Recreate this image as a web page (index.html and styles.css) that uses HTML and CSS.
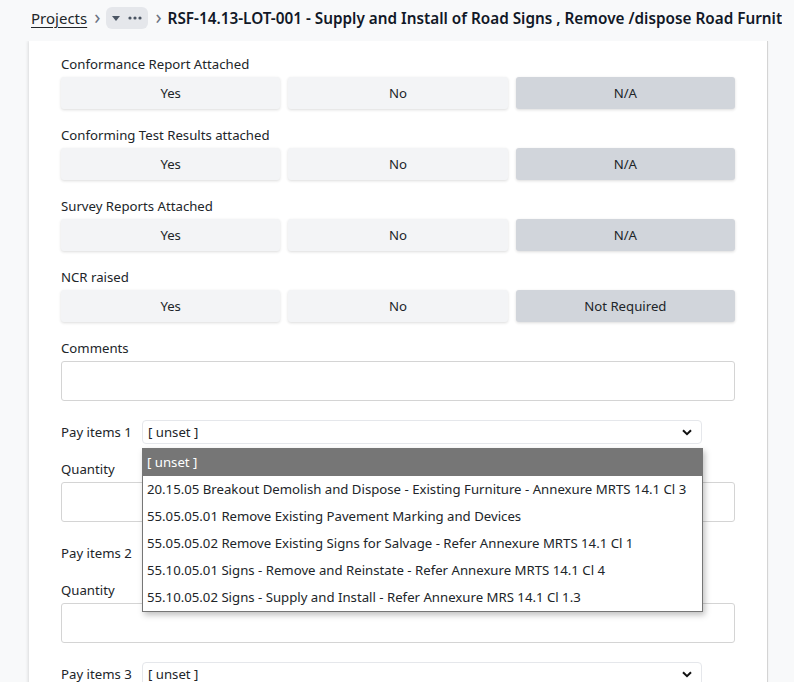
FILE: index.html
```html
<!DOCTYPE html>
<html>
<head>
<meta charset="utf-8">
<link rel="stylesheet" href="styles.css">
</head>
<body>
<header class="topbar">
  <a class="crumb-link" href="#">Projects</a>
  <span class="chev">&#x203A;</span>
  <span class="pill">
    <svg class="caret" width="8" height="5" viewBox="0 0 8 5"><path d="M0 0h8L4 5z" fill="#4b5563"/></svg>
    <svg class="dots" width="14" height="4" viewBox="0 0 14 4"><circle cx="2" cy="2" r="1.6" fill="#4b5563"/><circle cx="7" cy="2" r="1.6" fill="#4b5563"/><circle cx="12" cy="2" r="1.6" fill="#4b5563"/></svg>
  </span>
  <span class="chev">&#x203A;</span>
  <span class="title">RSF-14.13-LOT-001 - Supply and Install of Road Signs , Remove /dispose Road Furniture</span>
</header>
<main class="page">
  <section class="card">
    <div class="group">
      <div class="label">Conformance Report Attached</div>
      <div class="choices"><button class="opt">Yes</button><button class="opt">No</button><button class="opt sel">N/A</button></div>
    </div>
    <div class="group">
      <div class="label">Conforming Test Results attached</div>
      <div class="choices"><button class="opt">Yes</button><button class="opt">No</button><button class="opt sel">N/A</button></div>
    </div>
    <div class="group">
      <div class="label">Survey Reports Attached</div>
      <div class="choices"><button class="opt">Yes</button><button class="opt">No</button><button class="opt sel">N/A</button></div>
    </div>
    <div class="group">
      <div class="label">NCR raised</div>
      <div class="choices"><button class="opt">Yes</button><button class="opt">No</button><button class="opt sel">Not Required</button></div>
    </div>
    <div class="group comments">
      <div class="label">Comments</div>
      <div class="textbox"></div>
    </div>

    <div class="pay">
      <div class="pay-row">
        <span class="pay-label">Pay items 1</span>
        <div class="select-wrap">
          <div class="select"><span>[ unset ]</span>
            <svg class="sel-chev" width="10" height="7" viewBox="0 0 10 7"><path d="M1 1.2l4 4 4-4" fill="none" stroke="#111" stroke-width="2"/></svg>
          </div>
          <ul class="dropdown">
            <li class="active">[ unset ]</li>
            <li>20.15.05 Breakout Demolish and Dispose - Existing Furniture - Annexure MRTS 14.1 Cl 3</li>
            <li>55.05.05.01 Remove Existing Pavement Marking and Devices</li>
            <li>55.05.05.02 Remove Existing Signs for Salvage - Refer Annexure MRTS 14.1 Cl 1</li>
            <li>55.10.05.01 Signs - Remove and Reinstate - Refer Annexure MRTS 14.1 Cl 4</li>
            <li>55.10.05.02 Signs - Supply and Install - Refer Annexure MRS 14.1 Cl 1.3</li>
          </ul>
        </div>
      </div>
      <div class="label">Quantity</div>
      <div class="textbox"></div>
    </div>

    <div class="pay">
      <div class="pay-row">
        <span class="pay-label">Pay items 2</span>
        <div class="select-wrap">
          <div class="select"><span>[ unset ]</span>
            <svg class="sel-chev" width="10" height="7" viewBox="0 0 10 7"><path d="M1 1.2l4 4 4-4" fill="none" stroke="#111" stroke-width="2"/></svg>
          </div>
        </div>
      </div>
      <div class="label">Quantity</div>
      <div class="textbox"></div>
    </div>

    <div class="pay">
      <div class="pay-row">
        <span class="pay-label">Pay items 3</span>
        <div class="select-wrap">
          <div class="select"><span>[ unset ]</span>
            <svg class="sel-chev" width="10" height="7" viewBox="0 0 10 7"><path d="M1 1.2l4 4 4-4" fill="none" stroke="#111" stroke-width="2"/></svg>
          </div>
        </div>
      </div>
      <div class="label">Quantity</div>
      <div class="textbox"></div>
    </div>
  </section>
</main>
</body>
</html>
```
FILE: styles.css
```css
* { box-sizing: border-box; }
html, body { margin: 0; padding: 0; }
body {
  background: #f8f9fa;
  font-family: "Noto Sans", "Open Sans", sans-serif;
  font-size: 13.2px;
  color: #212529;
  overflow: hidden;
  height: 682px;
}
.topbar {
  height: 41px;
  background: #f8f9fa;
  display: flex;
  align-items: center;
  padding: 0 12px 5px 31px;
  white-space: nowrap;
  overflow: hidden;
  font-size: 15px;
  position: relative;
  z-index: 2;
}
.crumb-link { color: #212529; text-decoration: underline; text-underline-offset: 3px; }
.chev { color: #6b7280; font-size: 20px; margin: 0 6px 0 7px; line-height: 1; position: relative; top: -1px; }
.pill {
  display: inline-flex; align-items: center; gap: 8px;
  background: #e5e7eb; border-radius: 6px;
  height: 22px; padding: 0 6px 0 6px;
}
.title { font-weight: 600; color: #111827; font-size: 15.3px; overflow: hidden; min-width: 0; }
.page { display: flex; }
.card {
  margin-left: 29px;
  width: 739px;
  background: #fff;
  border-right: 1px solid #d4d4d4;
  box-shadow: -1px 0 3px rgba(0,0,0,0.12);
  padding: 13px 32px 0 32px;
  min-height: 700px;
}
.group { margin-bottom: 16px; }
.label { line-height: 20px; margin-bottom: 3px; }
.choices { display: grid; grid-template-columns: 1fr 1fr 1fr; gap: 8px; }
.opt {
  font: inherit; color: #212529;
  height: 32px;
  border: none; border-radius: 3px;
  background: #f3f4f6;
  box-shadow: 0 1px 3px rgba(0,0,0,0.14);
}
.opt.sel { background: #d1d5db; }
.textbox {
  height: 40px;
  border: 1px solid #d4d4d4;
  border-radius: 3px;
  background: #fff;
}
.comments { margin-bottom: 19px; }
.pay { margin-bottom: 19px; }
.pay-row { display: flex; align-items: center; margin-bottom: 15px; }
.pay-label { width: 81px; line-height: 20px; }
.select-wrap { position: relative; width: 560px; }
.select {
  height: 24px;
  border: 1px solid #e5e7eb;
  border-radius: 4px;
  display: flex; align-items: center; justify-content: space-between;
  padding: 0 9px 0 5px;
  background: #fff;
}
.dropdown {
  position: absolute; left: 0; top: 28px;
  width: 561px;
  margin: 0; padding: 0; list-style: none;
  background: #fff;
  border: 1px solid #767676;
  box-shadow: 2px 3px 6px rgba(0,0,0,0.25);
  z-index: 5;
}
.dropdown li {
  height: 27px; line-height: 27px;
  padding-left: 4px;
  white-space: nowrap; overflow: hidden;
  color: #212529;
}
.dropdown li.active { background: #767676; color: #fff; height: 27px; }
```
